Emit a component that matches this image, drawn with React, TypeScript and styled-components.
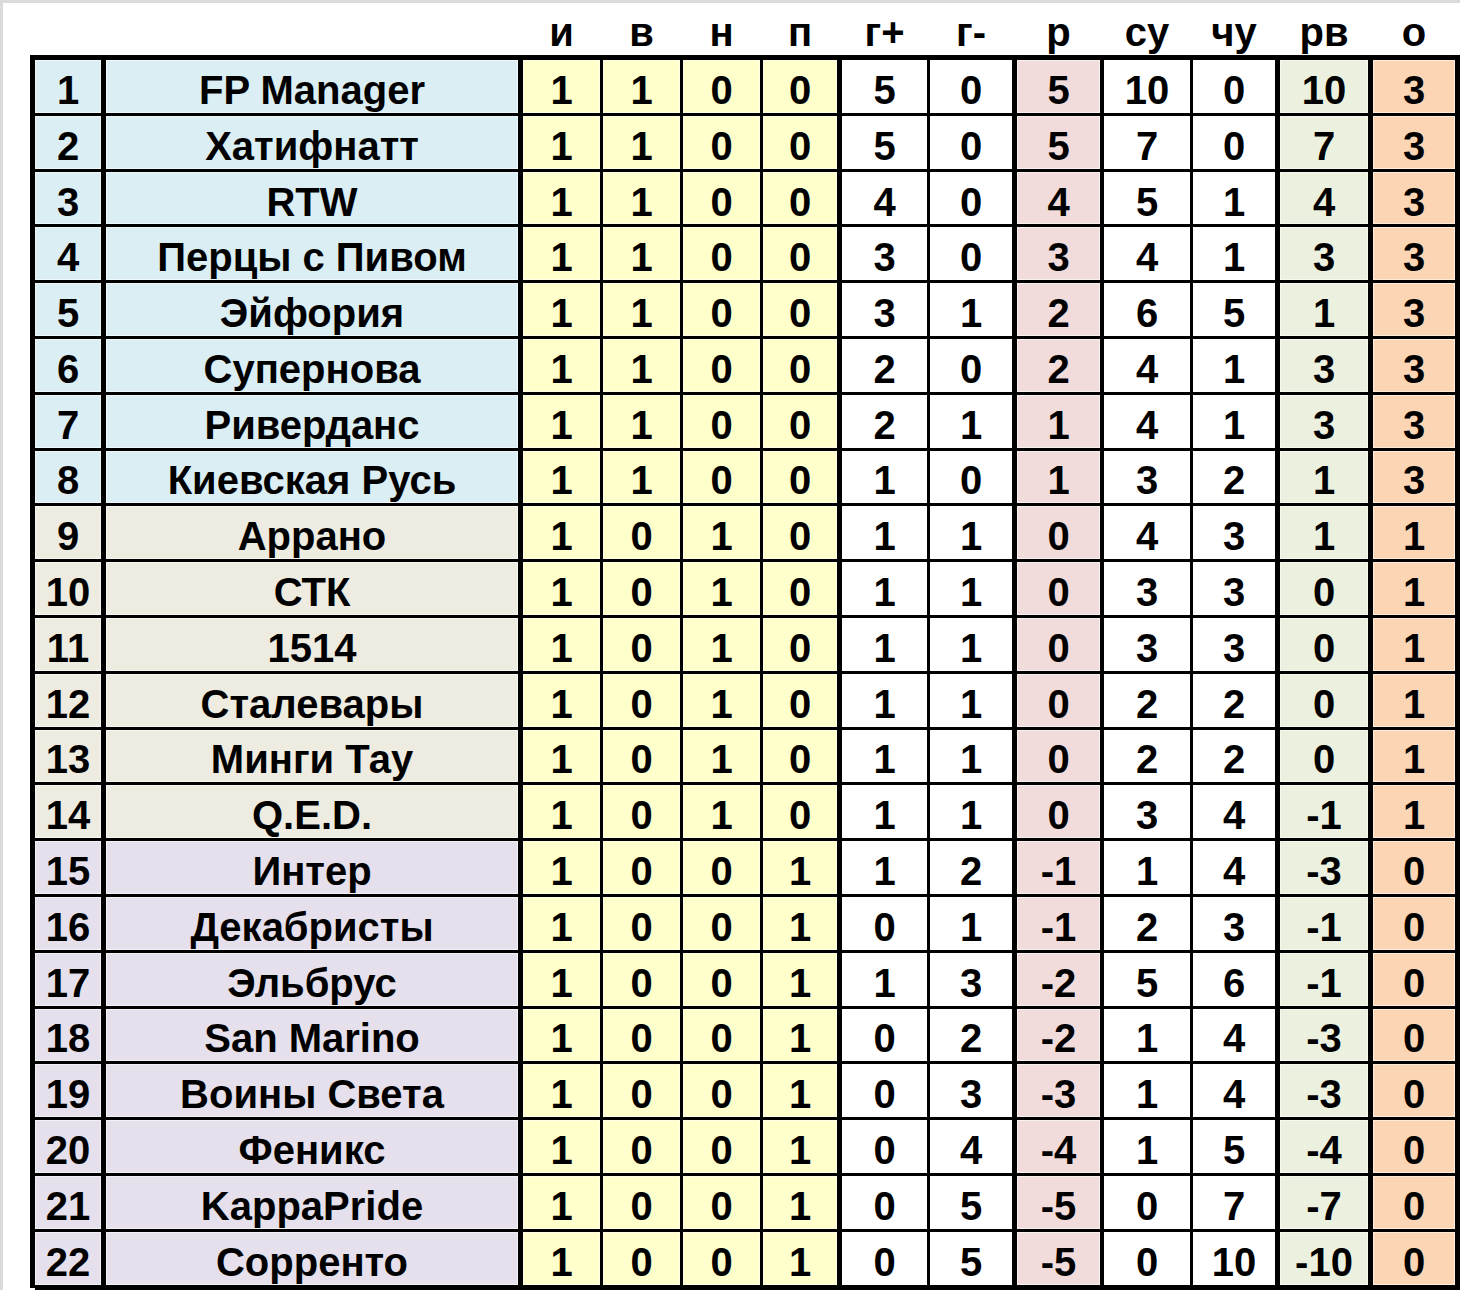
import React from 'react';
import styled, {createGlobalStyle} from "styled-components";

const GlobalStyle = createGlobalStyle`
  html, body {
    margin: 0;
    padding: 0;
    background: white;
  }
  body {
    font-family: "Liberation Sans", Arial, sans-serif;
  }
`

const YELLOW = '#ffffcc'
const PINK = '#f2dcdb'
const OLIVE = '#ebf1de'
const ORANGE = '#fcd5b4'

type Column = {
    label: string;
    width: number;
    border: number;
    bg?: string;
}

const columns: Column[] = [
    {label: '', width: 71, border: 5},
    {label: '', width: 417, border: 5},
    {label: 'и', width: 80, border: 3, bg: YELLOW},
    {label: 'в', width: 80, border: 3, bg: YELLOW},
    {label: 'н', width: 80, border: 3, bg: YELLOW},
    {label: 'п', width: 79, border: 5, bg: YELLOW},
    {label: 'г+', width: 88, border: 3, bg: 'white'},
    {label: 'г-', width: 87, border: 5, bg: 'white'},
    {label: 'р', width: 87, border: 4, bg: PINK},
    {label: 'су', width: 89, border: 3, bg: 'white'},
    {label: 'чу', width: 87, border: 5, bg: 'white'},
    {label: 'рв', width: 93, border: 5, bg: OLIVE},
    {label: 'о', width: 87, border: 5, bg: ORANGE},
]

const gridColumns = columns.map(c => c.width + 'px').join(' ')

// team, then и в н п г+ г- р су чу рв о
const table: [string, number[]][] = [
    ['FP Manager', [1, 1, 0, 0, 5, 0, 5, 10, 0, 10, 3]],
    ['Хатифнатт', [1, 1, 0, 0, 5, 0, 5, 7, 0, 7, 3]],
    ['RTW', [1, 1, 0, 0, 4, 0, 4, 5, 1, 4, 3]],
    ['Перцы с Пивом', [1, 1, 0, 0, 3, 0, 3, 4, 1, 3, 3]],
    ['Эйфория', [1, 1, 0, 0, 3, 1, 2, 6, 5, 1, 3]],
    ['Супернова', [1, 1, 0, 0, 2, 0, 2, 4, 1, 3, 3]],
    ['Риверданс', [1, 1, 0, 0, 2, 1, 1, 4, 1, 3, 3]],
    ['Киевская Русь', [1, 1, 0, 0, 1, 0, 1, 3, 2, 1, 3]],
    ['Аррано', [1, 0, 1, 0, 1, 1, 0, 4, 3, 1, 1]],
    ['СТК', [1, 0, 1, 0, 1, 1, 0, 3, 3, 0, 1]],
    ['1514', [1, 0, 1, 0, 1, 1, 0, 3, 3, 0, 1]],
    ['Сталевары', [1, 0, 1, 0, 1, 1, 0, 2, 2, 0, 1]],
    ['Минги Тау', [1, 0, 1, 0, 1, 1, 0, 2, 2, 0, 1]],
    ['Q.E.D.', [1, 0, 1, 0, 1, 1, 0, 3, 4, -1, 1]],
    ['Интер', [1, 0, 0, 1, 1, 2, -1, 1, 4, -3, 0]],
    ['Декабристы', [1, 0, 0, 1, 0, 1, -1, 2, 3, -1, 0]],
    ['Эльбрус', [1, 0, 0, 1, 1, 3, -2, 5, 6, -1, 0]],
    ['San Marino', [1, 0, 0, 1, 0, 2, -2, 1, 4, -3, 0]],
    ['Воины Света', [1, 0, 0, 1, 0, 3, -3, 1, 4, -3, 0]],
    ['Феникс', [1, 0, 0, 1, 0, 4, -4, 1, 5, -4, 0]],
    ['KappaPride', [1, 0, 0, 1, 0, 5, -5, 0, 7, -7, 0]],
    ['Сорренто', [1, 0, 0, 1, 0, 5, -5, 0, 10, -10, 0]],
]

const groupColor = (place: number) => {
    if (place <= 8) return '#daeef3'
    if (place <= 14) return '#eeece1'
    return '#e5e0ec'
}

const Frame = styled.div`
  width: 1460px;
  height: 1290px;
  box-sizing: border-box;
  border-top: 3px solid #dadada;
  border-left: 3px solid #dadada;
  padding-left: 27px;
  overflow: hidden;
`

const HeaderRow = styled.div`
  display: grid;
  grid-template-columns: ${gridColumns};
  padding-left: 5px;
  height: 52px;
`

const HeadCell = styled.div<{ $right: number }>`
  display: flex;
  align-items: center;
  justify-content: center;
  box-sizing: border-box;
  padding-top: 6px;
  padding-right: ${p => p.$right}px;
  font-size: 40px;
  font-weight: bold;
  color: black;
`

const Board = styled.div`
  display: grid;
  grid-template-columns: ${gridColumns};
  grid-auto-rows: 55.8px;
  border-top: 5px solid black;
  border-left: 5px solid black;
  width: max-content;
`

const Cell = styled.div<{ $bg: string; $right: number; $last: boolean }>`
  display: flex;
  align-items: center;
  justify-content: center;
  box-sizing: border-box;
  padding-top: 8px;
  background: ${p => p.$bg};
  border-right: ${p => p.$right}px solid black;
  border-bottom: ${p => p.$last ? 5 : 3}px solid black;
  height: ${p => p.$last ? '57.8px' : 'auto'};
  box-shadow: inset 0 0 0 1px rgba(255, 255, 255, 0.55);
  font-size: 40px;
  font-weight: bold;
  color: black;
  white-space: nowrap;
`

const App = () => {
    return (
        <>
            <GlobalStyle/>
            <Frame>
                <HeaderRow>
                    {columns.map((c, i) => (
                        <HeadCell key={i} $right={c.border}>{c.label}</HeadCell>
                    ))}
                </HeaderRow>
                <Board>
                    {table.map(([team, stats], r) => {
                        const place = r + 1
                        const last = r === table.length - 1
                        const values: (string | number)[] = [place, team, ...stats]
                        return values.map((v, i) => (
                            <Cell
                                key={`${r}-${i}`}
                                $bg={columns[i].bg ?? groupColor(place)}
                                $right={columns[i].border}
                                $last={last}
                            >
                                {v}
                            </Cell>
                        ))
                    })}
                </Board>
            </Frame>
        </>
    )
}

export default App;
